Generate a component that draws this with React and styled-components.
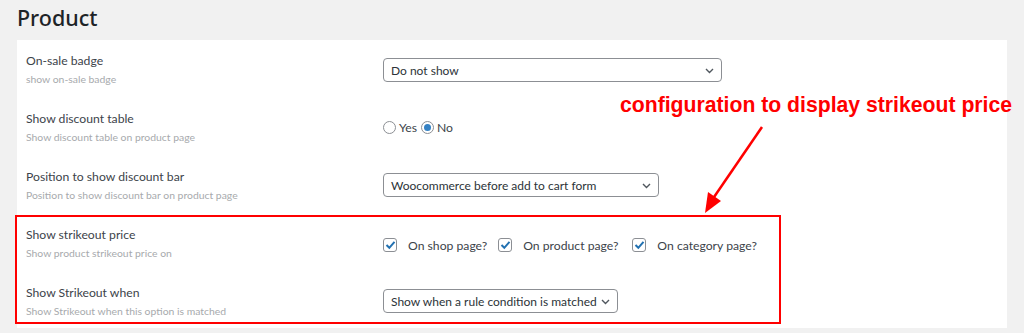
import React from "react";
import styled, { createGlobalStyle } from "styled-components";

const Global = createGlobalStyle`
  html, body { margin: 0; padding: 0; background: #f1f1f1; }
  body { font-family: Lato, "Noto Sans", sans-serif; color: #3c434a; }
`;

const Page = styled.div`
  position: relative;
  width: 1024px;
  height: 333px;
  overflow: hidden;
  background: #f1f1f1;
  padding: 3px 17px 0;
  box-sizing: border-box;
`;

const Title = styled.h2`
  margin: 0;
  height: 37px;
  font-family: "Noto Sans", sans-serif;
  font-size: 21.5px;
  line-height: 30px;
  font-weight: 500;
  color: #1d2327;
`;

const Panel = styled.div`
  width: 990px;
  height: 288px;
  background: #fff;
  padding-top: 1px;
  box-sizing: border-box;
`;

const Row = styled.div`
  display: grid;
  grid-template-columns: 357px 1fr;
  align-items: center;
  height: 58px;
  padding: 0 0 0 9px;
  box-sizing: border-box;
`;

const LabelBlock = styled.div`
  display: flex;
  flex-direction: column;
  align-self: start;
  padding-top: 11px;
`;

const Label = styled.div`
  font-size: 12.2px;
  line-height: 18px;
  color: #3c434a;
`;

const Desc = styled.div`
  font-size: 10.4px;
  line-height: 18px;
  color: #a7aaad;
`;

const Control = styled.div`
  display: flex;
  align-items: center;
  align-self: start;
  height: 36px;
  margin-top: ${(p) => p.$offset ?? 11}px;
`;

const SelectBox = styled.div`
  position: relative;
  width: ${(p) => p.$w}px;
  height: 24px;
  box-sizing: border-box;
  border: 1px solid #8c8f94;
  border-radius: 4px;
  display: flex;
  align-items: center;
  padding: 0 20px 0 7px;
  font-size: 12px;
  color: #2c3338;
  white-space: nowrap;
  background: #fff;
`;

const Chevron = styled.svg`
  position: absolute;
  right: 7px;
  top: 9px;
  width: 9px;
  height: 6px;
`;

const Radio = styled.span`
  width: 13px;
  height: 13px;
  box-sizing: border-box;
  border: 1px solid #8c8f94;
  border-radius: 50%;
  display: inline-flex;
  align-items: center;
  justify-content: center;
  margin-right: 3px;
  &::after {
    content: "";
    display: ${(p) => (p.$checked ? "block" : "none")};
    width: 7px;
    height: 7px;
    border-radius: 50%;
    background: #3582c4;
  }
`;

const OptText = styled.span`
  font-size: 12.2px;
  color: #3c434a;
  margin-right: ${(p) => p.$mr || 0}px;
`;

const Checkbox = styled.span`
  width: 14px;
  height: 14px;
  box-sizing: border-box;
  border: 1px solid #8c8f94;
  border-radius: 3px;
  display: inline-flex;
  align-items: center;
  justify-content: center;
  margin-right: 11px;
`;

const Annotation = styled.div`
  position: absolute;
  left: 0;
  top: 0;
  width: 1024px;
  height: 333px;
  pointer-events: none;
`;

const RedBox = styled.div`
  position: absolute;
  left: 15px;
  top: 215px;
  width: 766px;
  height: 109px;
  box-sizing: border-box;
  border: 2px solid #ff0000;
`;

const Note = styled.div`
  position: absolute;
  left: 620px;
  top: 92px;
  font-family: "Liberation Sans", Arial, sans-serif;
  font-weight: 700;
  font-size: 21.2px;
  line-height: 26px;
  color: #ff0000;
  white-space: nowrap;
`;

const Arrow = styled.svg`
  position: absolute;
  left: 690px;
  top: 120px;
  width: 90px;
  height: 100px;
`;

const Select = ({ w, children }) => (
  <SelectBox $w={w}>
    {children}
    <Chevron viewBox="0 0 9 6">
      <polyline points="1,1 4.5,4.5 8,1" fill="none" stroke="#50575e" strokeWidth="1.4" />
    </Chevron>
  </SelectBox>
);

const Check = () => (
  <Checkbox>
    <svg width="11" height="10" viewBox="0 0 11 10">
      <polyline points="1.5,5 4.3,7.8 9.5,1.8" fill="none" stroke="#2271b1" strokeWidth="2" />
    </svg>
  </Checkbox>
);

const Field = ({ label, desc, children, offset }) => (
  <Row>
    <LabelBlock>
      <Label>{label}</Label>
      <Desc>{desc}</Desc>
    </LabelBlock>
    <Control $offset={offset}>{children}</Control>
  </Row>
);

export default function App() {
  return (
    <>
      <Global />
      <Page>
        <Title>Product</Title>
        <Panel>
          <Field label="On-sale badge" desc="show on-sale badge">
            <Select w={339}>Do not show</Select>
          </Field>
          <Field label="Show discount table" desc="Show discount table on product page" offset={10}>
            <Radio />
            <OptText $mr={4}>Yes</OptText>
            <Radio $checked />
            <OptText>No</OptText>
          </Field>
          <Field label="Position to show discount bar" desc="Position to show discount bar on product page" offset={10}>
            <Select w={276}>Woocommerce before add to cart form</Select>
          </Field>
          <Field label="Show strikeout price" desc="Show product strikeout price on" offset={12}>
            <Check />
            <OptText $mr={11}>On shop page?</OptText>
            <Check />
            <OptText $mr={14}>On product page?</OptText>
            <Check />
            <OptText>On category page?</OptText>
          </Field>
          <Field label="Show Strikeout when" desc="Show Strikeout when this option is matched" offset={10}>
            <Select w={235}>Show when a rule condition is matched</Select>
          </Field>
        </Panel>
        <Annotation>
          <RedBox />
          <Note>configuration to display strikeout price</Note>
          <Arrow viewBox="0 0 90 100">
            <line x1="72" y1="7" x2="22" y2="80" stroke="#ff0000" strokeWidth="2.5" />
            <polygon points="15,93 18,72 31,81" fill="#ff0000" />
          </Arrow>
        </Annotation>
      </Page>
    </>
  );
}
